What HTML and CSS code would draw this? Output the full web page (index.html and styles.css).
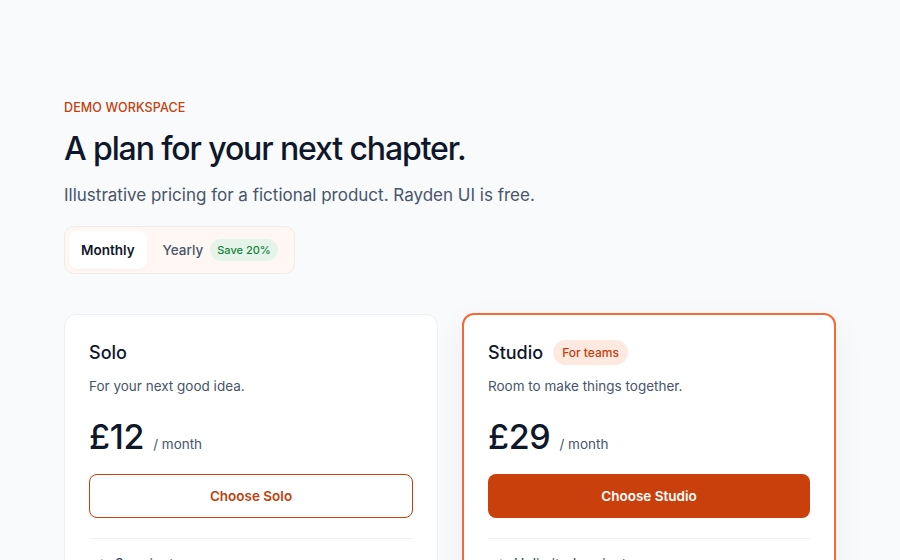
FILE: index.html
```html
<!DOCTYPE html>
<html lang="en">
<head>
<meta charset="utf-8">
<title>Pricing</title>
<link rel="stylesheet" href="styles.css">
</head>
<body>
<main class="page">
  <p class="eyebrow">DEMO WORKSPACE</p>
  <h1 class="title">A plan for your next chapter.</h1>
  <p class="subtitle">Illustrative pricing for a fictional product. Rayden UI is free.</p>
  <div class="toggle">
    <button class="seg seg-active">Monthly</button>
    <button class="seg">Yearly <span class="save">Save 20%</span></button>
  </div>
  <section class="cards">
    <article class="card">
      <div class="card-head"><h2 class="plan">Solo</h2></div>
      <p class="desc">For your next good idea.</p>
      <div class="price"><span class="amount">£12</span><span class="per">/ month</span></div>
      <button class="btn btn-outline">Choose Solo</button>
      <hr class="divider">
      <ul class="features">
        <li><svg class="check" viewBox="0 0 16 16" width="16" height="16"><path d="M3 8.5l3 3 7-7" fill="none" stroke="#1e293b" stroke-width="2" stroke-linecap="round" stroke-linejoin="round"/></svg>3 projects</li>
      </ul>
    </article>
    <article class="card card-featured">
      <div class="card-head"><h2 class="plan">Studio</h2><span class="tag">For teams</span></div>
      <p class="desc">Room to make things together.</p>
      <div class="price"><span class="amount">£29</span><span class="per">/ month</span></div>
      <button class="btn btn-solid">Choose Studio</button>
      <hr class="divider">
      <ul class="features">
        <li><svg class="check" viewBox="0 0 16 16" width="16" height="16"><path d="M3 8.5l3 3 7-7" fill="none" stroke="#1e293b" stroke-width="2" stroke-linecap="round" stroke-linejoin="round"/></svg>Unlimited projects</li>
      </ul>
    </article>
  </section>
</main>
</body>
</html>
```
FILE: styles.css
```css
* { box-sizing: border-box; }
html, body { margin: 0; padding: 0; }
body {
  background: #f8fafc;
  font-family: Inter, "Noto Sans", sans-serif;
  color: #0f172a;
  height: 560px;
  overflow: hidden;
}
.page {
  padding: 99px 64px 0 64px;
}
.eyebrow {
  margin: 0;
  font-size: 12.5px;
  font-weight: 500;
  line-height: 18px;
  color: #c2410c;
  letter-spacing: 0.01em;
}
.title {
  margin: 12px 0 0 0;
  font-size: 32px;
  font-weight: 500;
  line-height: 40px;
  letter-spacing: -0.035em;
  color: #0f172a;
}
.subtitle {
  margin: 13px 0 0 0;
  font-size: 17px;
  line-height: 26px;
  color: #475569;
}
.toggle {
  margin-top: 18px;
  display: inline-flex;
  align-items: center;
  gap: 4px;
  padding: 4px;
  background: #fff7f3;
  border: 1px solid #f1ece8;
  border-radius: 10px;
}
.seg {
  font-family: inherit;
  border: 0;
  background: transparent;
  font-size: 13.5px;
  font-weight: 500;
  color: #475569;
  height: 38px;
  padding: 0 12px;
  border-radius: 8px;
  display: inline-flex;
  align-items: center;
  gap: 7px;
}
.seg-active {
  background: #ffffff;
  color: #0f172a;
  font-weight: 600;
  box-shadow: 0 1px 2px rgba(15, 23, 42, 0.04);
}
.save {
  background: #e5f4e8;
  color: #15803d;
  font-size: 11px;
  font-weight: 500;
  padding: 4px 7px;
  border-radius: 999px;
  line-height: 14px;
}
.cards {
  margin-top: 40px;
  display: grid;
  grid-template-columns: 1fr 1fr;
  gap: 24px;
  align-items: start;
}
.card {
  background: #ffffff;
  border: 1px solid #edf0f4;
  border-radius: 12px;
  padding: 24px;
  height: 320px;
}
.card-featured {
  border: 2px solid #f26a36;
  margin-top: -1px;
  box-shadow: 0 10px 30px rgba(15, 23, 42, 0.06);
}
.card-head {
  display: flex;
  align-items: center;
  gap: 10px;
  height: 26px;
}
.plan {
  margin: 0;
  font-size: 18px;
  font-weight: 500;
  color: #0f172a;
}
.tag {
  background: #fde9e0;
  color: #c2410c;
  font-size: 12px;
  font-weight: 500;
  padding: 5px 9px;
  border-radius: 999px;
  line-height: 15px;
}
.desc {
  margin: 11px 0 0 0;
  font-size: 13.5px;
  line-height: 20px;
  color: #475569;
}
.price {
  margin-top: 19px;
  display: flex;
  align-items: baseline;
  gap: 9px;
  height: 44px;
  line-height: 44px;
}
.amount {
  font-size: 34px;
  font-weight: 500;
  letter-spacing: -0.01em;
  color: #0f172a;
}
.per {
  font-size: 13.5px;
  color: #475569;
}
.btn {
  margin-top: 15px;
  width: 100%;
  height: 44px;
  border-radius: 8px;
  font-family: inherit;
  font-size: 13.5px;
  font-weight: 600;
  display: block;
}
.btn-outline {
  background: #ffffff;
  border: 1px solid #c2410c;
  color: #c2410c;
}
.btn-solid {
  background: #c9400c;
  border: 0;
  color: #ffffff;
}
.divider {
  margin: 20px 0 0 0;
  border: 0;
  border-top: 1px solid #eef1f4;
}
.features {
  list-style: none;
  margin: 16px 0 0 0;
  padding: 0;
}
.features li {
  display: flex;
  align-items: center;
  gap: 10px;
  font-size: 14px;
  color: #334155;
}
```
